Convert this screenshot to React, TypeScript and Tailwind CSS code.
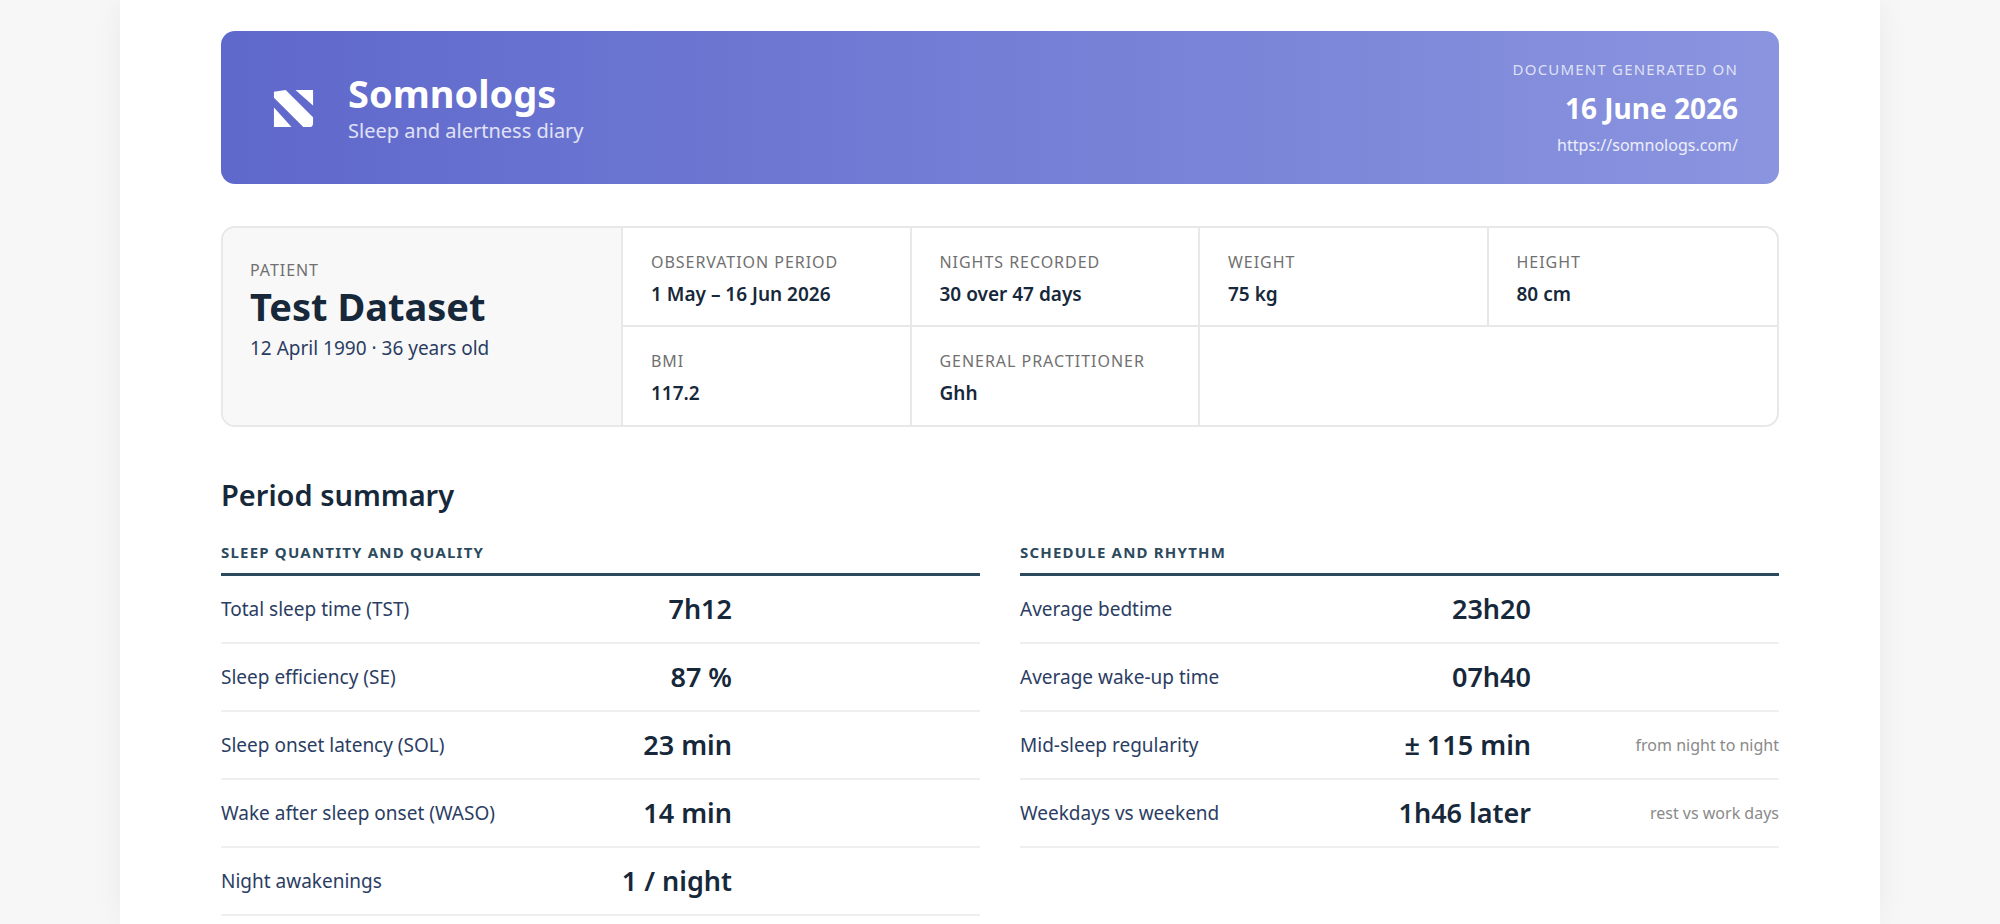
const font = { fontFamily: '"Noto Sans", Inter, sans-serif' };

const quality = [
  { label: "Total sleep time (TST)", value: "7h12" },
  { label: "Sleep efficiency (SE)", value: "87 %" },
  { label: "Sleep onset latency (SOL)", value: "23 min" },
  { label: "Wake after sleep onset (WASO)", value: "14 min" },
  { label: "Night awakenings", value: "1 / night" },
];

const rhythm = [
  { label: "Average bedtime", value: "23h20" },
  { label: "Average wake-up time", value: "07h40" },
  { label: "Mid-sleep regularity", value: "± 115 min", note: "from night to night" },
  { label: "Weekdays vs weekend", value: "1h46 later", note: "rest vs work days" },
];

function Logo() {
  return (
    <svg viewBox="0 0 44 44" className="h-[43px] w-[43px]" fill="white">
      <polygon points="24,4 42,4 42,20" />
      <path d="M2,6 L14,4 L42,32 L42,38 Q42,42 38,42 L32,42 L2,12 Z" />
      <polygon points="2,22 2,42 20,42" />
    </svg>
  );
}

function Cell({ label, value, className = "" }: { label: string; value: string; className?: string }) {
  return (
    <div className={`px-7 pt-[22px] ${className}`}>
      <div className="text-[16px] tracking-[0.06em] text-[#707070] uppercase">{label}</div>
      <div className="mt-[6px] text-[19px] font-semibold text-[#16283a]">{value}</div>
    </div>
  );
}

function Table({ title, rows }: { title: string; rows: { label: string; value: string; note?: string }[] }) {
  return (
    <div>
      <div className="border-b-[3px] border-[#2c4a5e] pb-[10px] text-[15px] font-bold tracking-[0.08em] text-[#2c4a5e]">
        {title}
      </div>
      {rows.map((r) => (
        <div
          key={r.label}
          className="grid h-[68px] grid-cols-[300px_211px_1fr] items-center border-b-2 border-[#efefef] last:border-b-2"
        >
          <span className="text-[19px] text-[#2b3d63]">{r.label}</span>
          <span className="text-right text-[27px] font-semibold text-[#16283a]">{r.value}</span>
          <span className="text-right text-[16px] text-[#8a8a8a]">{r.note}</span>
        </div>
      ))}
    </div>
  );
}

export default function App() {
  return (
    <div className="min-h-[924px] w-[2000px] overflow-hidden bg-[#f7f7f8]" style={font}>
      <div className="mx-[120px] h-[924px] bg-white px-[101px] pt-[31px] shadow-[0_0_30px_rgba(0,0,0,0.06)]">
        <div className="flex h-[153px] items-center justify-between rounded-[14px] bg-gradient-to-r from-[#5f68cb] to-[#8a94df] pr-[41px] pl-[51px]">
          <div className="flex items-center gap-[33px]">
            <Logo />
            <div>
              <div className="text-[38px] leading-[46px] font-bold text-white">Somnologs</div>
              <div className="text-[20px] text-white/80">Sleep and alertness diary</div>
            </div>
          </div>
          <div className="text-right">
            <div className="text-[15px] tracking-[0.08em] text-white/75">DOCUMENT GENERATED ON</div>
            <div className="mt-[6px] text-[28px] font-bold text-white">16 June 2026</div>
            <div className="mt-[4px] text-[16px] text-white/85">https://somnologs.com/</div>
          </div>
        </div>

        <div className="mt-[42px] flex h-[201px] overflow-hidden rounded-[14px] border-2 border-[#e8e8e8]">
          <div className="w-[400px] border-r-2 border-[#e8e8e8] bg-[#f8f8f8] px-[27px] pt-[30px]">
            <div className="text-[16px] tracking-[0.06em] text-[#707070]">PATIENT</div>
            <div className="text-[38px] leading-[48px] font-bold text-[#16283a]">Test Dataset</div>
            <div className="mt-[4px] text-[19px] text-[#2b3d63]">12 April 1990 · 36 years old</div>
          </div>
          <div className="grid flex-1 grid-cols-4 grid-rows-2">
            <Cell label="Observation period" value="1 May – 16 Jun 2026" className="border-r-2 border-b-2 border-[#e8e8e8]" />
            <Cell label="Nights recorded" value="30 over 47 days" className="border-r-2 border-b-2 border-[#e8e8e8]" />
            <Cell label="Weight" value="75 kg" className="border-r-2 border-b-2 border-[#e8e8e8]" />
            <Cell label="Height" value="80 cm" className="border-b-2 border-[#e8e8e8]" />
            <Cell label="BMI" value="117.2" className="border-r-2 border-[#e8e8e8]" />
            <Cell label="General practitioner" value="Ghh" className="border-r-2 border-[#e8e8e8]" />
          </div>
        </div>

        <h2 className="mt-[46px] text-[29px] font-semibold text-[#16283a]">Period summary</h2>
        <div className="mt-[24px] grid grid-cols-2 gap-[40px]">
          <Table title="SLEEP QUANTITY AND QUALITY" rows={quality} />
          <Table title="SCHEDULE AND RHYTHM" rows={rhythm} />
        </div>
      </div>
    </div>
  );
}
